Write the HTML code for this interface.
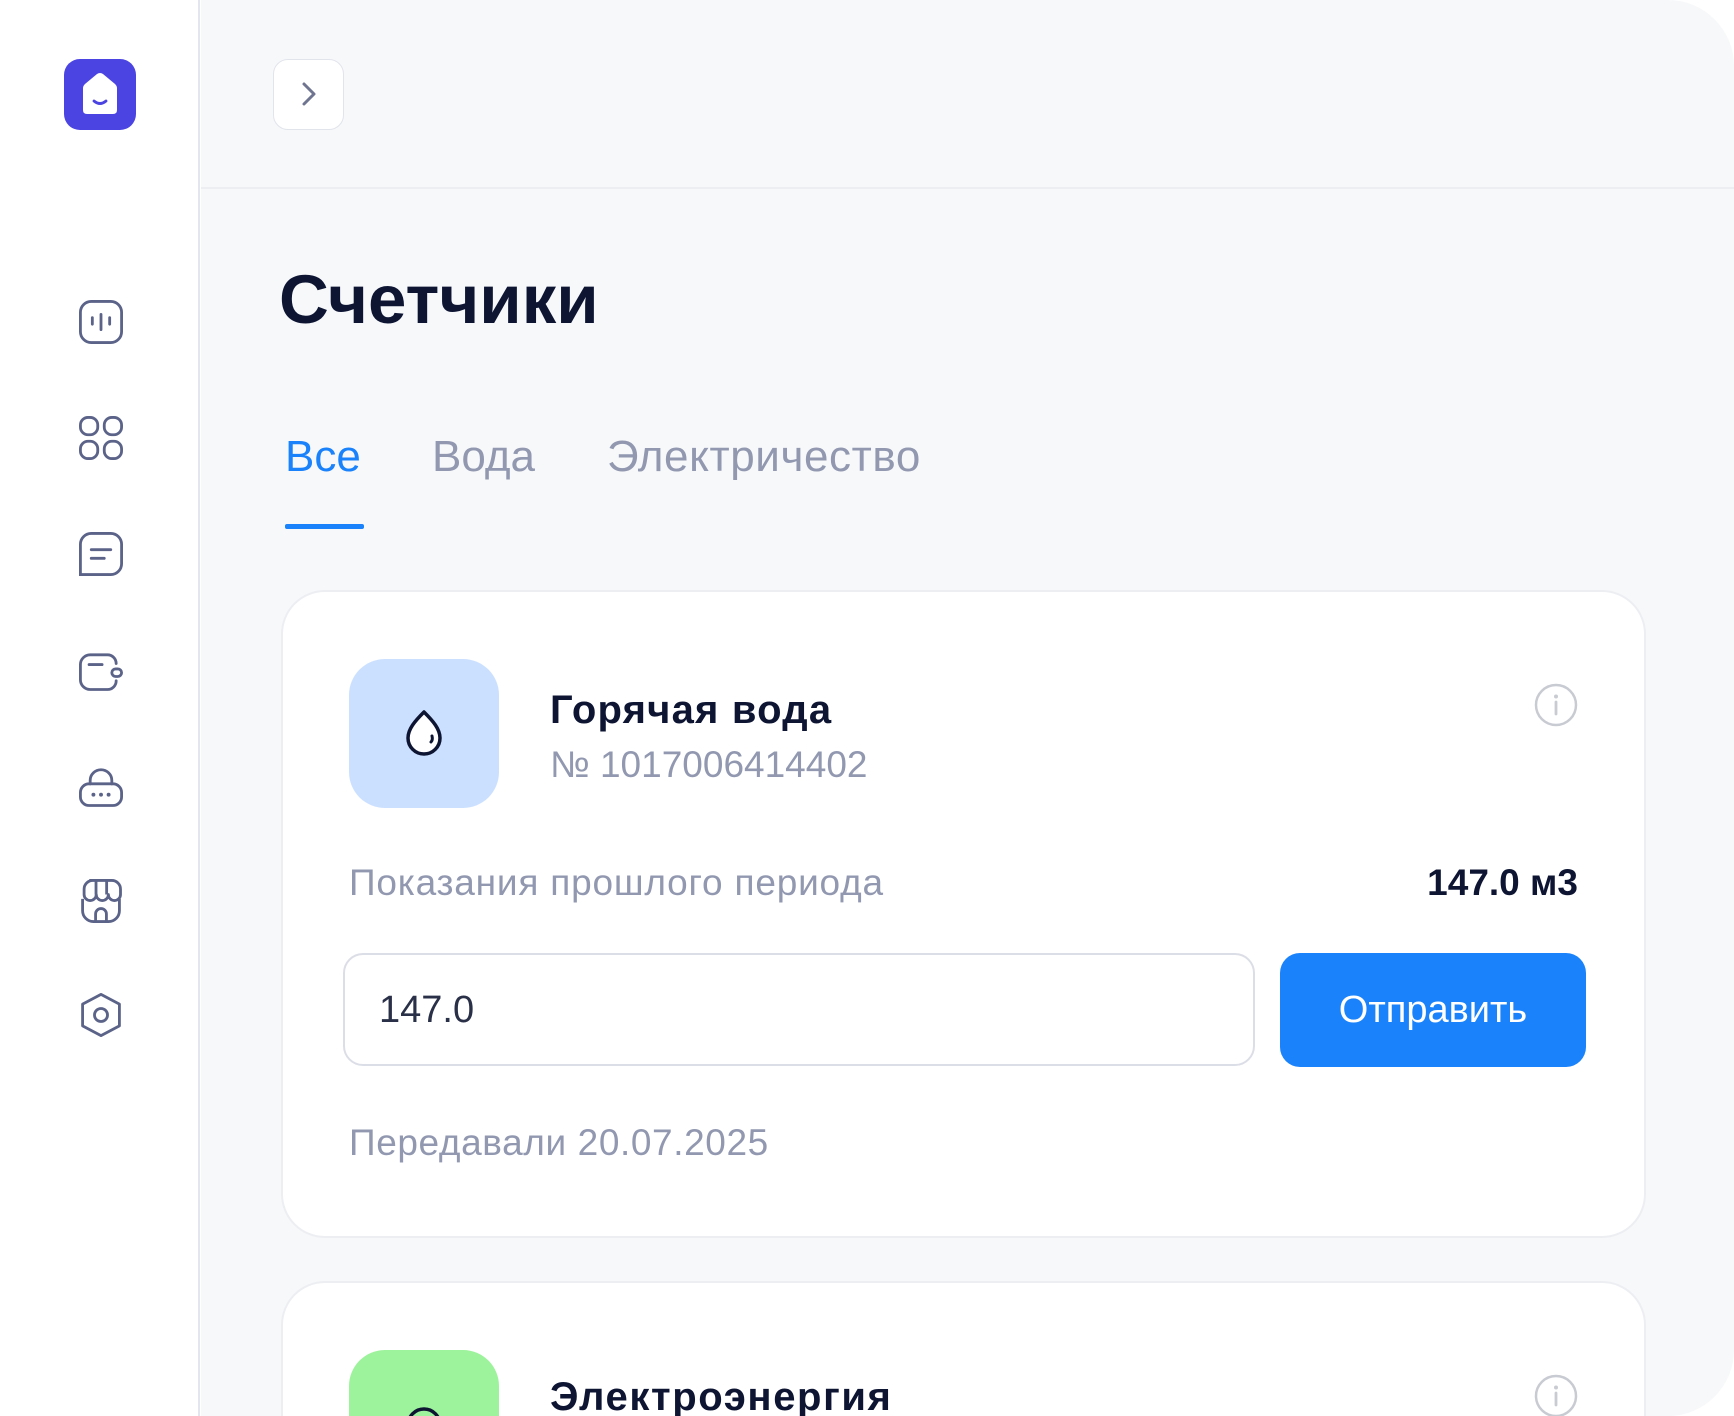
<!DOCTYPE html>
<html><head><meta charset="utf-8"><style>
*{margin:0;padding:0;box-sizing:border-box}
html,body{width:1734px;height:1416px;overflow:hidden}
body{background:#fff;font-family:"Liberation Sans",sans-serif;position:relative}
.side{position:absolute;left:0;top:0;width:200px;height:1416px;background:#fff;border-right:2px solid #e3e6ef}
.main{position:absolute;left:201px;top:0;width:1533px;height:1416px;background:#f7f8fa;border-radius:0 66px 66px 0;overflow:hidden}
.a{position:absolute}
.ic{position:absolute;left:75px;width:52px;height:52px}
.card{position:absolute;left:80px;width:1365px;background:#fff;border:2px solid #eceef2;border-radius:44px}
</style></head><body>
<div class="side">
 <div class="a" style="left:64px;top:59px;width:72px;height:71px;background:#4b44e2;border-radius:16px">
  <svg width="72" height="71" viewBox="0 0 72 71"><path d="M19 29 Q19 27 21 25 L33 15 Q36 13 39 15 L51 25 Q53 27 53 29 V51 Q53 55 49 55 H23 Q19 55 19 51Z" fill="#fff"/><path d="M30 42 Q36 47 42 42" fill="none" stroke="#4b44e2" stroke-width="2.8" stroke-linecap="round"/></svg>
 </div>
 <svg class="ic" style="top:296px" viewBox="0 0 24 24" fill="none" stroke="#5b6389" stroke-width="1.3" stroke-linecap="round"><rect x="2.5" y="2.5" width="19" height="19" rx="5"/><path d="M8 10v3M12 8.5v7M16 10v3"/></svg>
 <svg class="ic" style="top:412px" viewBox="0 0 24 24" fill="none" stroke="#5b6389" stroke-width="1.3"><rect x="2.5" y="2.5" width="8" height="8" rx="3.5"/><rect x="13.5" y="2.5" width="8" height="8" rx="3.5"/><rect x="2.5" y="13.5" width="8" height="8" rx="3.5"/><rect x="13.5" y="13.5" width="8" height="8" rx="3.5"/></svg>
 <svg class="ic" style="top:528px" viewBox="0 0 24 24" fill="none" stroke="#5b6389" stroke-width="1.3" stroke-linecap="round"><path d="M2.5 21.5V7.5a5 5 0 0 1 5-5h9a5 5 0 0 1 5 5v9a5 5 0 0 1-5 5z"/><path d="M7.5 10h9M7.5 14h6"/></svg>
 <svg class="ic" style="top:644px" viewBox="0 0 24 24" fill="none" stroke="#5b6389" stroke-width="1.3" stroke-linecap="round"><path d="M19 9a4 4 0 0 0-4-4H7a4.5 4.5 0 0 0-4.5 4.5v7A4.5 4.5 0 0 0 7 21h8a4 4 0 0 0 4-4"/><path d="M6.5 9.5h6"/><rect x="17" y="11.5" width="4.5" height="3.5" rx="1.75"/></svg>
 <svg class="ic" style="top:760px" viewBox="0 0 24 24" fill="none" stroke="#5b6389" stroke-width="1.3" stroke-linecap="round"><path d="M7 11V9.5a5 5 0 0 1 10 0V11"/><rect x="2.5" y="11" width="19" height="10" rx="4"/><path d="M8.5 16h.01M12 16h.01M15.5 16h.01" stroke-width="1.8"/></svg>
 <svg class="ic" style="top:875px" viewBox="0 0 24 24" fill="none" stroke="#5b6389" stroke-width="1.3" stroke-linejoin="round"><path d="M3.5 11v5.5a5 5 0 0 0 5 5h7a5 5 0 0 0 5-5V11"/><path d="M7 2.5h10a4 4 0 0 1 4 4V9a2.8 2.8 0 0 1-5.6 0 2.8 2.8 0 0 1-5.6 0 2.8 2.8 0 0 1-5.6 0V6.5a4 4 0 0 1 4-4z"/><path d="M9.5 21.5V18a2.5 2.5 0 0 1 5 0v3.5M9.7 3v6M14.6 3v6"/></svg>
 <svg class="ic" style="top:989px" viewBox="0 0 24 24" fill="none" stroke="#5b6389" stroke-width="1.3" stroke-linejoin="round"><path d="M12 2.5l8.5 4.5v10L12 21.5 3.5 17V7z"/><circle cx="12" cy="12" r="3"/></svg>
</div>
<div class="main">
 <div class="a" style="left:72px;top:59px;width:71px;height:71px;background:#fff;border:1.5px solid #e2e4ec;border-radius:15px">
  <svg width="68" height="68" viewBox="0 0 68 68"><path d="M30 24l10 10-10 10" fill="none" stroke="#6f7590" stroke-width="3" stroke-linecap="round" stroke-linejoin="round"/></svg>
 </div>
 <div class="a" style="left:0;top:187px;width:1533px;height:1.5px;background:#eceef2"></div>
 <div class="a" style="left:78px;top:260px;font-size:69px;font-weight:bold;color:#0d1533">Счетчики</div>
 <div class="a" style="left:84px;top:432px;font-size:44px;color:#1a82fb">Все</div>
 <div class="a" style="left:231px;top:432px;font-size:44px;color:#9198b0">Вода</div>
 <div class="a" style="left:406px;top:432px;font-size:44px;color:#9198b0;letter-spacing:0.6px">Электричество</div>
 <div class="a" style="left:84px;top:524px;width:79px;height:5px;background:#1a82fb;border-radius:2px"></div>
 <div class="card" style="top:590px;height:648px">
  <div class="a" style="left:66px;top:67px;width:150px;height:149px;background:#cbe0ff;border-radius:36px">
   <svg width="150" height="149" viewBox="0 0 150 149"><path d="M75 53 C66 62 59 70 59 79 a16 16 0 0 0 32 0 C91 70 84 62 75 53Z" fill="#fff" stroke="#0d1533" stroke-width="3.5" stroke-linejoin="round"/><path d="M83 77 q1 4-1 6" fill="none" stroke="#0d1533" stroke-width="3" stroke-linecap="round"/></svg>
  </div>
  <div class="a" style="left:267px;top:96px;font-size:40px;font-weight:bold;color:#0d1533;letter-spacing:1.2px">Горячая вода</div>
  <div class="a" style="left:267px;top:152px;font-size:37px;color:#9198b0">№ 1017006414402</div>
  <svg class="a" style="left:1250px;top:90px" width="46" height="46" viewBox="0 0 46 46"><circle cx="23" cy="23" r="20" fill="none" stroke="#c9cbd3" stroke-width="2.5"/><path d="M23 20v12" stroke="#c9cbd3" stroke-width="2.8" stroke-linecap="round"/><circle cx="23" cy="14.5" r="2" fill="#c9cbd3"/></svg>
  <div class="a" style="left:66px;top:270px;font-size:37px;color:#9198b0;letter-spacing:0.8px">Показания прошлого периода</div>
  <div class="a" style="right:66px;top:270px;font-size:37px;font-weight:bold;color:#0d1533">147.0 м3</div>
  <div class="a" style="left:60px;top:361px;width:912px;height:113px;border:2px solid #dcdee7;border-radius:20px;font-size:38px;color:#2a3048;padding:34px 0 0 34px">147.0</div>
  <div class="a" style="left:997px;top:361px;width:306px;height:114px;background:#1a82fb;border-radius:20px;color:#fff;font-size:38px;text-align:center;line-height:114px">Отправить</div>
  <div class="a" style="left:66px;top:530px;font-size:37px;color:#9198b0;letter-spacing:0.6px">Передавали 20.07.2025</div>
 </div>
 <div class="card" style="top:1281px;height:135px;border-bottom:none;border-radius:44px 44px 0 0">
  <div class="a" style="left:66px;top:67px;width:150px;height:66px;background:#9df29c;border-radius:36px 36px 0 0;overflow:hidden">
   <svg width="150" height="66" viewBox="0 0 150 66"><circle cx="75" cy="75" r="16" fill="none" stroke="#0d1533" stroke-width="3.5"/></svg>
  </div>
  <div class="a" style="left:267px;top:96px;font-size:40px;line-height:37px;height:37px;overflow:hidden;font-weight:bold;color:#0d1533;letter-spacing:1.6px">Электроэнергия</div>
  <svg class="a" style="left:1250px;top:90px" width="46" height="43" viewBox="0 0 46 43"><circle cx="23" cy="23" r="20" fill="none" stroke="#c9cbd3" stroke-width="2.5"/><path d="M23 20v12" stroke="#c9cbd3" stroke-width="2.8" stroke-linecap="round"/><circle cx="23" cy="14.5" r="2" fill="#c9cbd3"/></svg>
 </div>
</div>
</body></html>
